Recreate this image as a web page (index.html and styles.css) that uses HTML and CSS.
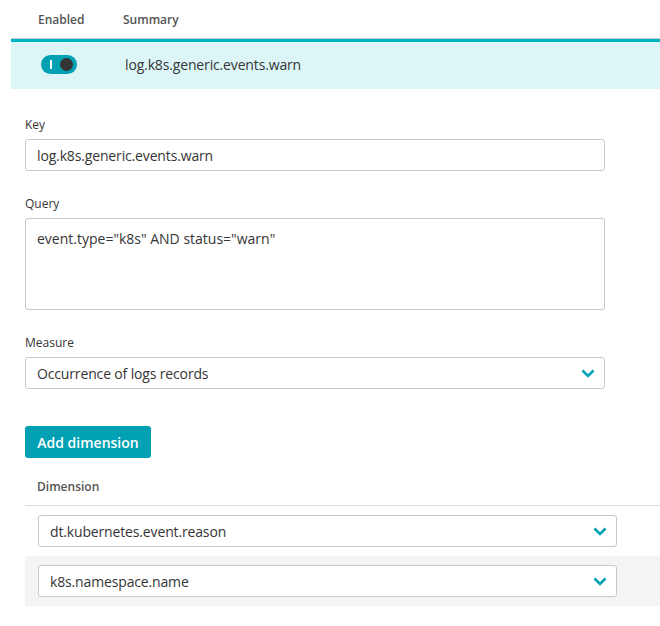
FILE: index.html
```html
<!DOCTYPE html>
<html>
<head>
<meta charset="utf-8">
<link rel="stylesheet" href="styles.css">
</head>
<body>
<div class="page">
  <div class="table-head">
    <div class="col-enabled">Enabled</div>
    <div class="col-summary">Summary</div>
  </div>
  <div class="table-row">
    <div class="col-enabled">
      <span class="toggle"><span class="toggle-bar"></span><span class="toggle-knob"></span></span>
    </div>
    <div class="col-summary row-text">log.k8s.generic.events.warn</div>
  </div>

  <div class="form">
    <div class="field">
      <label class="label">Key</label>
      <div class="input">log.k8s.generic.events.warn</div>
    </div>
    <div class="field">
      <label class="label">Query</label>
      <div class="input textarea">event.type="k8s" AND status="warn"</div>
    </div>
    <div class="field">
      <label class="label">Measure</label>
      <div class="input select">
        <span>Occurrence of logs records</span>
        <svg class="chev" width="14" height="9" viewBox="0 0 14 9"><path d="M1.5 1.5 L7 7 L12.5 1.5" fill="none" stroke="#00a1b2" stroke-width="2.6"/></svg>
      </div>
    </div>
    <button class="btn">Add dimension</button>

    <div class="dim-table">
      <div class="dim-head">Dimension</div>
      <div class="dim-row">
        <div class="input select">
          <span>dt.kubernetes.event.reason</span>
          <svg class="chev" width="14" height="9" viewBox="0 0 14 9"><path d="M1.5 1.5 L7 7 L12.5 1.5" fill="none" stroke="#00a1b2" stroke-width="2.6"/></svg>
        </div>
      </div>
      <div class="dim-row alt">
        <div class="input select">
          <span>k8s.namespace.name</span>
          <svg class="chev" width="14" height="9" viewBox="0 0 14 9"><path d="M1.5 1.5 L7 7 L12.5 1.5" fill="none" stroke="#00a1b2" stroke-width="2.6"/></svg>
        </div>
      </div>
    </div>
  </div>
</div>
</body>
</html>
```

FILE: styles.css
```css
* { box-sizing: border-box; }
html, body { margin: 0; padding: 0; background: #fff; }
body {
  font-family: "Open Sans", "Liberation Sans", sans-serif;
  color: #353535;
  font-size: 14px;
}
.page { padding-left: 11px; }

.table-head {
  display: flex;
  height: 39px;
  align-items: center;
  font-size: 12px;
  font-weight: 600;
  color: #555;
  border-bottom: 1px solid #ccc;
}
.col-enabled { width: 85px; padding-left: 27px; }
.col-summary { flex: 1; padding-left: 27px; }

.table-row {
  display: flex;
  align-items: center;
  height: 50px;
  padding-bottom: 3px;
  background: #dcf5f7;
  border-top: 3px solid #00b4c4;
}
.col-enabled { display: flex; align-items: center; }
.table-row .col-enabled { padding-left: 30px; }
.row-text { font-size: 14px; color: #353535; padding-left: 29px; letter-spacing: -0.15px; }

.toggle {
  position: relative;
  display: inline-block;
  width: 36px;
  height: 19px;
  border-radius: 10px;
  background: #00a1b2;
}
.toggle-bar {
  position: absolute;
  left: 9px;
  top: 5px;
  width: 2px;
  height: 9px;
  background: #fff;
}
.toggle-knob {
  position: absolute;
  right: 4px;
  top: 3px;
  width: 13px;
  height: 13px;
  border-radius: 50%;
  background: #353535;
}

.form { padding: 28px 55px 0 14px; }
.field { display: flex; flex-direction: column; margin-bottom: 25px; }
.label {
  font-size: 12px;
  color: #353535;
  line-height: 16px;
  margin-bottom: 6px;
}
.input {
  height: 32px;
  border: 1px solid #c8c8c8;
  border-radius: 3px;
  padding: 0 11px;
  display: flex;
  align-items: center;
  font-size: 14px;
  color: #353535;
  background: #fff;
  letter-spacing: -0.15px;
}
.textarea {
  height: 92px;
  align-items: flex-start;
  padding-top: 10px;
  letter-spacing: 0;
}
.select { justify-content: space-between; }
.chev { margin-right: -2px; }

.btn {
  margin-top: 12px;
  height: 32px;
  width: 126px;
  border: none;
  border-radius: 3px;
  background: #00a1b2;
  color: #fff;
  font-family: "Open Sans", "Liberation Sans", sans-serif;
  font-size: 14px;
  font-weight: 600;
  padding: 0;
}

.dim-table { margin-top: 15px; margin-right: -55px; }
.dim-head {
  height: 33px;
  display: flex;
  align-items: center;
  padding-left: 12px;
  padding-bottom: 5px;
  font-size: 12px;
  font-weight: 600;
  color: #555;
  border-bottom: 1px solid #ddd;
}
.dim-row {
  padding: 9px 43px 9px 13px;
  height: 50px;
}
.dim-row.alt { background: #f4f4f4; }
.dim-row .input { height: 32px; }
```
